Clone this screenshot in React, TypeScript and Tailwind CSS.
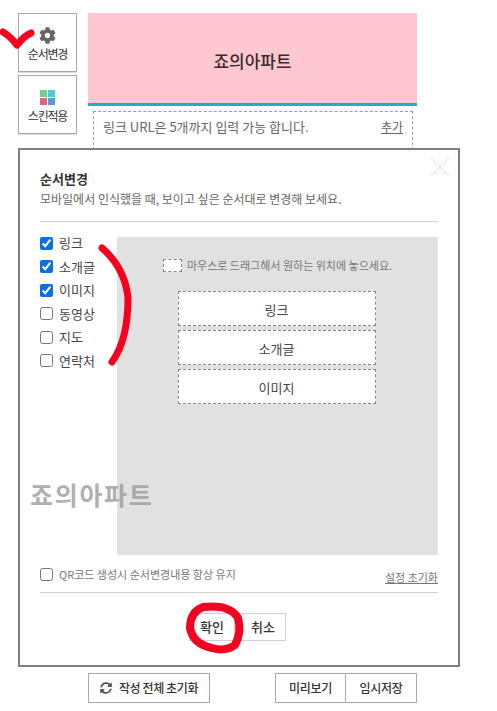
import { FaCog, FaSyncAlt } from 'react-icons/fa';

const font = { fontFamily: '"Noto Sans CJK KR", "Noto Sans", sans-serif' };

const options = [
  { label: '링크', checked: true },
  { label: '소개글', checked: true },
  { label: '이미지', checked: true },
  { label: '동영상', checked: false },
  { label: '지도', checked: false },
  { label: '연락처', checked: false },
];

function SideButton({ icon, label }: { icon: React.ReactNode; label: string }) {
  return (
    <button className="flex h-[59px] w-[59px] flex-col items-center border border-[#a8a8a8] bg-white pt-[13px] shadow-[0_1px_1px_#ddd]">
      <div className="flex h-[17px] items-center justify-center">{icon}</div>
      <span className="mt-[3px] text-[12px] leading-[14px] tracking-[-1.2px] text-[#333]">{label}</span>
    </button>
  );
}

export default function App() {
  return (
    <div className="relative h-[711px] w-[497px] overflow-hidden bg-white" style={font}>
      {/* Page behind the popup */}
      <div className="flex h-[148px] gap-[11px] overflow-hidden pl-[18px] pt-[13px]">
        <div className="flex flex-col gap-[3px]">
          <SideButton icon={<FaCog size={17} className="text-[#666]" />} label="순서변경" />
          <SideButton
            icon={
              <div className="grid grid-cols-2 gap-px">
                <div className="h-[7px] w-[7px] bg-[#6fcf8e]" />
                <div className="h-[7px] w-[7px] bg-[#56c7d6]" />
                <div className="h-[7px] w-[7px] bg-[#e0667f]" />
                <div className="h-[7px] w-[7px] bg-[#4f9fdc]" />
              </div>
            }
            label="스킨적용"
          />
        </div>
        <div className="w-[329px]">
          <div className="flex h-[90px] items-center justify-center bg-[#ffc8d1] pt-[6px] text-[17px] font-medium text-[#3a2a2e]">
            죠의아파트
          </div>
          <div className="h-[3px] bg-[#1bb0c4]" />
          <div className="ml-[5px] mr-[4px] mt-[5px] flex h-[60px] items-start justify-between border border-dashed border-[#999] px-[9px] pt-[7px] text-[13px] leading-[16px] text-[#666]">
            <span>링크 URL은 5개까지 입력 가능 합니다.</span>
            <span className="text-[12px] underline">추가</span>
          </div>
        </div>
      </div>

      {/* Order popup */}
      <div className="relative ml-[18px] h-[519px] w-[442px] border-2 border-[#808080] bg-white px-[20px] pt-[21px]">
        <svg className="absolute right-[8px] top-[7px]" width="20" height="20" viewBox="0 0 20 20">
          <path d="M1 1 L19 19 M19 1 L1 19" stroke="#dcdcdc" strokeWidth="1" />
        </svg>

        <h2 className="text-[13px] font-bold leading-[16px] text-[#333]">순서변경</h2>
        <p className="mt-[4px] text-[12px] leading-[16px] text-[#666]">
          모바일에서 인식했을 때, 보이고 싶은 순서대로 변경해 보세요.
        </p>
        <div className="mt-[14px] border-t border-[#cfcfcf]" />

        <div className="mt-[13px] flex">
          <div className="flex w-[77px] flex-col gap-[7.5px]">
            {options.map((o) => (
              <label key={o.label} className="flex h-[16px] items-center gap-[6px] text-[13px] leading-[16px] text-[#444]">
                <input
                  type="checkbox"
                  defaultChecked={o.checked}
                  className="m-0 h-[13px] w-[13px] accent-[#0b6fdc]"
                />
                {o.label}
              </label>
            ))}
          </div>

          <div className="mt-[2px] flex h-[318px] w-[321px] flex-col items-center bg-[#e1e1e1] pt-[21px]">
            <div className="flex items-center gap-[5px] text-[11px] leading-[14px] text-[#777]">
              <div className="h-[13px] w-[19px] border border-dashed border-[#888] bg-white" />
              마우스로 드래그해서 원하는 위치에 놓으세요.
            </div>
            <div className="mr-[2px] mt-[19px] flex flex-col gap-[4px]">
              {options
                .filter((o) => o.checked)
                .map((o) => (
                  <div
                    key={o.label}
                    className="flex h-[35px] w-[198px] items-center justify-center border border-dashed border-[#888] bg-white pt-[2px] text-[13px] text-[#444]"
                  >
                    {o.label}
                  </div>
                ))}
            </div>
          </div>
        </div>

        <div className="mt-[6px] flex h-[26px] items-center justify-between">
          <label className="flex items-center gap-[6px] text-[11px] leading-[14px] text-[#777]">
            <input type="checkbox" className="m-0 h-[13px] w-[13px]" />
            QR코드 생성시 순서변경내용 항상 유지
          </label>
          <span className="mt-[6px] text-[11px] leading-[14px] text-[#777] underline">설정 초기화</span>
        </div>
        <div className="mt-[5px] border-t border-[#cfcfcf]" />

        <div className="mt-[20px] flex justify-center gap-[5px] pr-[3px]">
          <button className="h-[28px] w-[46px] border border-[#d0d0d0] bg-white text-[13px] font-medium text-[#333]">확인</button>
          <button className="h-[28px] w-[46px] border border-[#d0d0d0] bg-white text-[13px] font-medium text-[#333]">취소</button>
        </div>

        <div className="absolute left-[10px] top-[329px] text-[25px] font-bold leading-[30px] tracking-[1.7px] text-[#9a9a9a]/80">
          죠의아파트
        </div>
      </div>

      {/* Bottom actions */}
      <div className="mt-[6px] flex pl-[88px]">
        <button className="flex h-[30px] w-[122px] items-center justify-center gap-[7px] border border-[#aaa] bg-white text-[12px] font-medium tracking-[-0.4px] text-[#333]">
          <FaSyncAlt size={12} className="text-[#555]" />
          작성 전체 초기화
        </button>
        <div className="ml-[65px] flex">
          <button className="h-[30px] w-[71px] border border-[#aaa] bg-white text-[12px] font-medium tracking-[-0.3px] text-[#333]">미리보기</button>
          <button className="-ml-px h-[30px] w-[72px] border border-[#aaa] bg-white text-[12px] font-medium tracking-[-0.3px] text-[#333]">임시저장</button>
        </div>
      </div>

      {/* Red marker annotations */}
      <svg className="pointer-events-none absolute left-0 top-0" width="497" height="711" viewBox="0 0 497 711" fill="none">
        <g stroke="#f5001e" strokeLinecap="round" strokeLinejoin="round">
          <path d="M3 32 Q10 36 17 45 Q24 36 31 33" strokeWidth="7" />
          <path d="M102 248 Q125 268 128 298 Q128 340 112 362" strokeWidth="7" />
          <path d="M203 607 Q190 612 190 628 Q193 644 212 648 Q225 652 235 645 Q242 632 238 618 Q230 604 203 607 Z" strokeWidth="8" />
        </g>
      </svg>
    </div>
  );
}
